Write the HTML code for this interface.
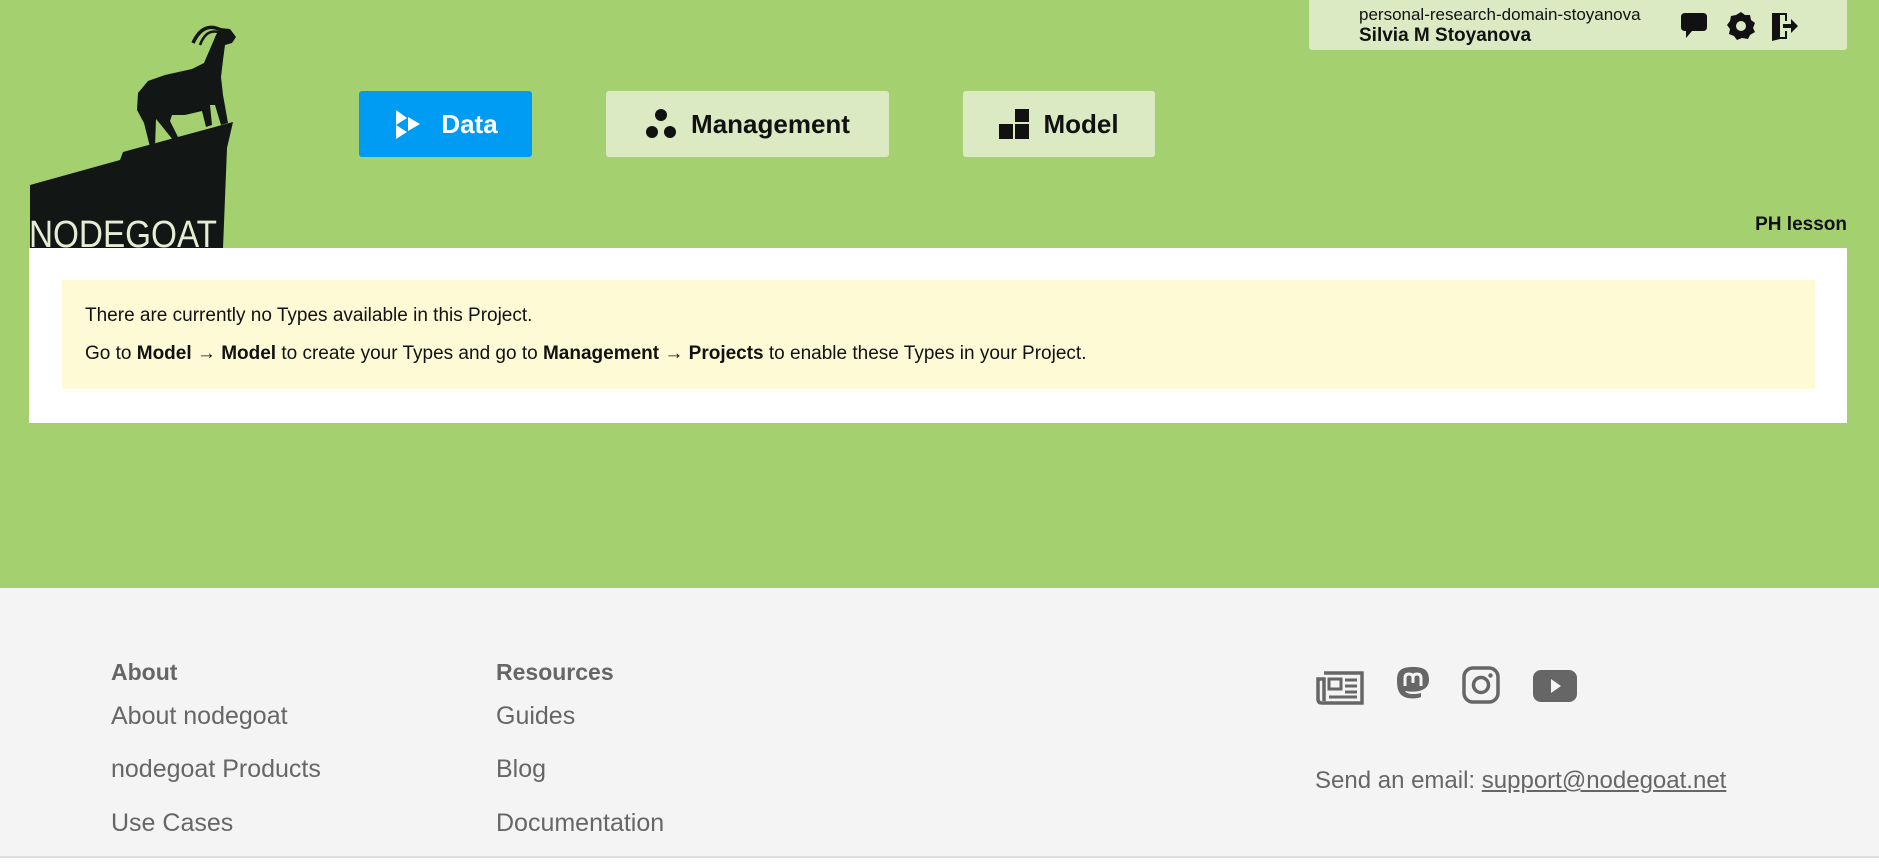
<!DOCTYPE html>
<html><head><meta charset="utf-8"><style>
*{margin:0;padding:0;box-sizing:border-box}
body{width:1879px;height:864px;overflow:hidden;background:#fff;font-family:"Liberation Sans",sans-serif;position:relative}
.green{position:absolute;left:0;top:0;width:1879px;height:588px;background:#a4d070}
.abs{position:absolute}
.btn{position:absolute;top:91px;height:66px;border-radius:3px;background:#dceac4;display:flex;align-items:center;justify-content:center;font-weight:bold;font-size:26px;color:#111}
.btn svg{margin-right:14px}
.userbox{position:absolute;left:1309px;top:0;width:538px;height:50px;background:#dceac4;border-radius:0 0 3px 3px}
.footer{position:absolute;left:0;top:588px;width:1879px;height:270px;background:#f4f4f4;border-bottom:2px solid #ddd;color:#666}
.fh{position:absolute;font-weight:bold;font-size:23px}
.fl{position:absolute;font-size:25px}
</style></head><body>
<div class="green"></div>
<svg class="abs" style="left:20px;top:15px" width="230" height="233" viewBox="0 0 230 233">
<path fill="#121614" d="M10 170 L100 145 L103 137 L213 107 L207 133 L203 233 L10 233 Z"/>
<path fill="#121614" d="M130 132 L124 108 L117 95 L118 78 L128 66 L145 60 L172 54 L184 48 L190 34 L196 20 L200 13 L210 14 L216 22 L212 28 L205 30 L203 45 L201 62 L203 80 L208 108 L201 110 L195 90 L190 90 L192 110 L186 112 L182 96 L165 100 L152 100 L150 106 L158 122 L153 125 L141 110 L136 104 L135 132 Z"/>
<path fill="none" stroke="#121614" stroke-width="3.5" d="M201 15 Q183 6 173 28"/>
<path fill="none" stroke="#121614" stroke-width="2.5" d="M198 17 Q186 14 180 30"/>
<text x="9" y="232" font-family="Liberation Sans" font-size="38" fill="#e6edd4" textLength="188" lengthAdjust="spacingAndGlyphs">NODEGOAT</text>
</svg>
<div class="btn" style="left:359px;width:173px;background:#009cf3;color:#fff"><svg width="34" height="30" viewBox="0 0 34 30"><path fill="#fff" d="M3 1 L14 9 L3 16 Z M3 16 L14 23 L3 30Z M15 8 L27 15 L15 22Z"/></svg>Data</div>
<div class="btn" style="left:606px;width:283px"><svg width="32" height="32" viewBox="0 0 32 32"><circle cx="16" cy="7" r="6" fill="#111"/><circle cx="7" cy="24" r="6" fill="#111"/><circle cx="25" cy="24" r="6" fill="#111"/></svg>Management</div>
<div class="btn" style="left:963px;width:192px"><svg width="30" height="30" viewBox="0 0 30 30"><rect x="0" y="15" width="14" height="15" fill="#111"/><rect x="16" y="15" width="14" height="15" fill="#111"/><rect x="16" y="0" width="14" height="13" fill="#111"/></svg>Model</div>
<div class="userbox">
<div class="abs" style="left:50px;top:5px;font-size:17px;color:#111">personal-research-domain-stoyanova</div>
<div class="abs" style="left:50px;top:25px;font-size:19px;font-weight:bold;color:#111">Silvia M Stoyanova</div>
<svg class="abs" style="left:371px;top:12px" width="28" height="28" viewBox="0 0 28 28"><path fill="#111" d="M5 1 H23 Q27 1 27 5 V15 Q27 19 23 19 H12 L6 26 V19 H5 Q1 19 1 15 V5 Q1 1 5 1Z"/></svg>
<svg class="abs" style="left:418px;top:12px" width="28" height="28" viewBox="0 0 28 28"><path fill="#111" d="M14 0 L18 3 L23 3 L24 8 L28 11 L26 16 L28 20 L23 23 L21 27 L15 26 L10 28 L7 24 L2 22 L3 17 L0 13 L3 9 L4 4 L9 3Z"/><circle cx="14" cy="14" r="5" fill="#dceac4"/></svg>
<svg class="abs" style="left:462px;top:11px" width="28" height="30" viewBox="0 0 28 30"><path fill="#111" d="M1 2 H16 V10 H14 V4 H9 V26 H14 V20 H16 V28 H9 L1 30Z"/><path fill="#111" d="M12 13 H20 V8 L27 15 L20 22 V17 H12Z"/></svg>
</div>
<div class="abs" style="right:32px;top:214px;font-size:19px;font-weight:bold;color:#111">PH lesson</div>
<div class="abs" style="left:29px;top:248px;width:1818px;height:175px;background:#fff"></div>
<div class="abs" style="left:62px;top:280px;width:1753px;height:109px;background:#fffad6"></div>
<div class="abs" style="left:85px;top:305px;font-size:19px;color:#111">There are currently no Types available in this Project.</div>
<div class="abs" style="left:85px;top:343px;font-size:19px;color:#111">Go to <b>Model → Model</b> to create your Types and go to <b>Management → Projects</b> to enable these Types in your Project.</div>
<div class="footer">
<div class="fh" style="left:111px;top:71px">About</div>
<div class="fl" style="left:111px;top:114px">About nodegoat</div>
<div class="fl" style="left:111px;top:167px">nodegoat Products</div>
<div class="fl" style="left:111px;top:221px">Use Cases</div>
<div class="fh" style="left:496px;top:71px">Resources</div>
<div class="fl" style="left:496px;top:114px">Guides</div>
<div class="fl" style="left:496px;top:167px">Blog</div>
<div class="fl" style="left:496px;top:221px">Documentation</div>
<svg class="abs" style="left:1316px;top:82px" width="48" height="36" viewBox="0 0 48 36"><path fill="none" stroke="#666" stroke-width="3.5" d="M8 3 H46 V33 H6 Q2 33 2 29 V9 H8 V31"/><rect x="13" y="9" width="12" height="10" fill="none" stroke="#666" stroke-width="3"/><path stroke="#666" stroke-width="3" d="M29 10 H41 M29 16 H41 M29 22 H41 M13 27 H41"/></svg>
<svg class="abs" style="left:1396px;top:78px" width="34" height="38" viewBox="0 0 34 38"><path fill="#666" d="M17 1 C6 1 1 4 1 14 C1 24 3 30 12 32 C18 33 23 32 25 31 V27 C18 29 10 28 9 25 C20 27 33 25 33 14 C33 4 28 1 17 1Z"/><path fill="none" stroke="#f4f4f4" stroke-width="3" d="M9 20 V12 Q9 8 13 8 Q17 8 17 12 V17 M17 12 Q17 8 21 8 Q25 8 25 12 V20"/></svg>
<svg class="abs" style="left:1462px;top:78px" width="38" height="38" viewBox="0 0 38 38"><rect x="2" y="2" width="34" height="34" rx="9" fill="none" stroke="#666" stroke-width="3.5"/><circle cx="19" cy="19" r="7.5" fill="none" stroke="#666" stroke-width="3.5"/><circle cx="28.5" cy="9.5" r="2.2" fill="#666"/></svg>
<svg class="abs" style="left:1533px;top:82px" width="44" height="32" viewBox="0 0 44 32"><rect x="0" y="0" width="44" height="32" rx="8" fill="#666"/><path fill="#f4f4f4" d="M18 9 L28 16 L18 23Z"/></svg>
<div class="fl" style="left:1315px;top:179px;font-size:24px">Send an email: <span style="text-decoration:underline">support@nodegoat.net</span></div>
</div>
</body></html>
